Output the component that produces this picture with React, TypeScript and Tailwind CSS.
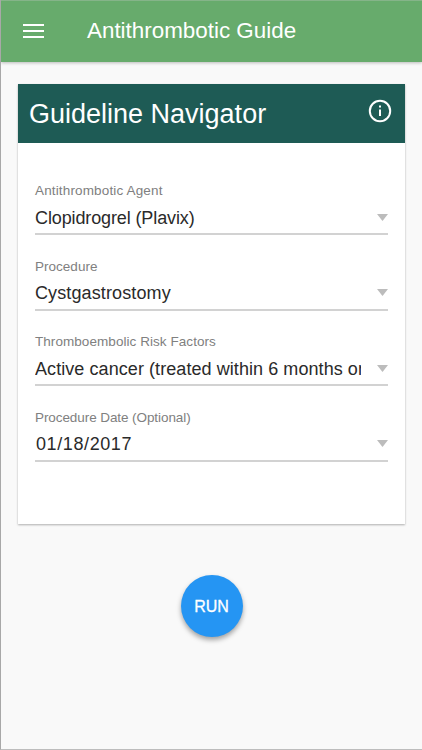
import { useState } from 'react'

const initialFields = [
  { label: 'Antithrombotic Agent', value: 'Clopidrogrel (Plavix)', labelClass: 'tracking-[0.15px]', valueClass: 'tracking-[-0.12px]' },
  { label: 'Procedure', value: 'Cystgastrostomy', labelClass: 'tracking-[0.02px]', valueClass: 'tracking-[0.12px]' },
  { label: 'Thromboembolic Risk Factors', value: 'Active cancer (treated within 6 months or', labelClass: 'tracking-[0.06px]', valueClass: 'tracking-[0.07px]' },
  { label: 'Procedure Date (Optional)', value: '01/18/2017', labelClass: 'tracking-[-0.08px]', valueClass: 'tracking-[0.6px] pl-[1px]' },
]

export default function App() {
  const [fields] = useState(initialFields)

  return (
    <div className="flex flex-col h-[750px] bg-[#f9f9f9] border-l border-b border-l-[#a8a8a8] border-b-[#bdbdbd] font-['Liberation_Sans',Arial,sans-serif] overflow-hidden">
      <header className="flex items-center h-[62px] shrink-0 bg-[#67ab6c] border-t border-[#85b489] text-white pl-[22px] pb-[2px] shadow-[0_1px_3px_rgba(0,0,0,0.25)]">
        <button aria-label="Menu" className="flex flex-col gap-[4px] w-[21px]">
          <span className="h-[2px] bg-white" />
          <span className="h-[2px] bg-white" />
          <span className="h-[2px] bg-white" />
        </button>
        <h1 className="ml-[43px] text-[22.4px] leading-7 whitespace-nowrap">Antithrombotic Guide</h1>
      </header>

      <main className="flex flex-col items-center">
        <section className="mt-[21.5px] w-[387px] h-[440px] bg-white shadow-[0_1px_2px_rgba(0,0,0,0.3)]">
          <div className="flex items-center justify-between h-[59.5px] bg-[#1e5b55] text-white pl-[11px] pr-[13px]">
            <h2 className="pt-[1px] text-[27px] leading-8 whitespace-nowrap">Guideline Navigator</h2>
            <svg viewBox="0 0 24 24" className="size-6 mb-[5px]" fill="none" stroke="currentColor" strokeWidth="2">
              <circle cx="12" cy="12" r="10.2" />
              <path d="M12 10.500v6.500M12 6.500v2" />
            </svg>
          </div>
          <div className="px-[17px] pt-[38px]">
            {fields.map((field) => (
              <div key={field.label} className="h-[75.5px]">
                <div className={`text-[13.5px] leading-[18px] pt-px text-[#808080] whitespace-nowrap ${field.labelClass}`}>{field.label}</div>
                <button className="flex items-center w-full h-[35px] pt-[2px] border-b-2 border-[#d2d2d2] text-left">
                  <span className={`w-[326px] overflow-hidden whitespace-nowrap text-[18px] leading-6 text-[#2a2a2a] ${field.valueClass}`}>{field.value}</span>
                  <svg viewBox="0 0 11 7" className="ml-auto mb-[1px] w-[11px] h-[7px] fill-[#bcbcbc]">
                    <path d="M0 0h11L5.500 7z" />
                  </svg>
                </button>
              </div>
            ))}
          </div>
        </section>
        <button className="mt-[51.5px] size-[62px] rounded-full bg-[#2595f3] text-white text-base [-webkit-text-stroke:0.3px_white] pt-[2px] shadow-[0_3px_5px_rgba(0,0,0,0.35)]">RUN</button>
      </main>
    </div>
  )
}
